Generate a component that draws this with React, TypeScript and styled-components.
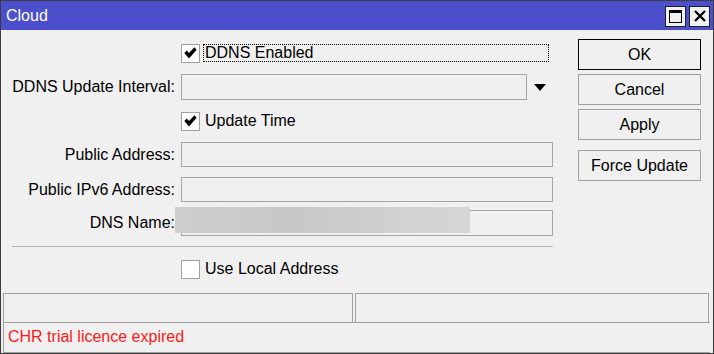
import React from "react";
import styled, { createGlobalStyle } from "styled-components";

const GlobalStyle = createGlobalStyle`
  html, body {
    margin: 0;
    padding: 0;
    background: #f0f0f0;
  }
  *, *:before, *:after {
    box-sizing: border-box;
    font-family: "Liberation Sans", Arial, sans-serif;
  }
`;

function CheckMark() {
  return (
    <svg width="13" height="12" viewBox="0 0 13 12">
      <path d="M0.3 6 L2.8 3.6 L5 6.1 L10.3 0.3 L12.7 2.7 L5 11.5 Z" fill="#000" />
    </svg>
  );
}

function CheckBox({ checked }: { checked?: boolean }) {
  return <StyledBox>{checked && <CheckMark />}</StyledBox>;
}

function Field({
  label,
  top,
  height,
  children,
}: {
  label?: string;
  top: number;
  height: number;
  children: React.ReactNode;
}) {
  return (
    <StyledRow $top={top} $height={height}>
      <StyledLabel>{label}</StyledLabel>
      <StyledCell>{children}</StyledCell>
    </StyledRow>
  );
}

export default function App() {
  return (
    <StyledWindow>
      <GlobalStyle />
      <StyledTitleBar>
        <StyledTitle>Cloud</StyledTitle>
        <StyledTitleButtons>
          <StyledTitleButton>
            <StyledMaxIcon />
          </StyledTitleButton>
          <StyledTitleButton>
            <svg width="12" height="12" viewBox="0 0 12 12">
              <path d="M1 1 L11 11 M11 1 L1 11" stroke="#000" strokeWidth="2.2" />
            </svg>
          </StyledTitleButton>
        </StyledTitleButtons>
      </StyledTitleBar>

      <StyledMain>
        <StyledForm>
          <Field top={11} height={24}>
            <CheckBox checked />
            <StyledFocusText>DDNS Enabled</StyledFocusText>
          </Field>
          <Field label="DDNS Update Interval:" top={9} height={26}>
            <StyledInput $width={346} />
            <StyledArrow />
          </Field>
          <Field top={9} height={24}>
            <CheckBox checked />
            <StyledCheckText>Update Time</StyledCheckText>
          </Field>
          <Field label="Public Address:" top={9} height={25}>
            <StyledInput />
          </Field>
          <Field label="Public IPv6 Address:" top={10} height={25}>
            <StyledInput />
          </Field>
          <Field label="DNS Name:" top={8} height={26}>
            <StyledInput />
            <StyledRedaction />
          </Field>
          <StyledSeparator />
          <Field top={10} height={24}>
            <CheckBox />
            <StyledCheckText>Use Local Address</StyledCheckText>
          </Field>
        </StyledForm>

        <StyledButtons>
          <StyledButton $default>OK</StyledButton>
          <StyledButton>Cancel</StyledButton>
          <StyledButton>Apply</StyledButton>
          <StyledButton $gap={10}>Force Update</StyledButton>
        </StyledButtons>
      </StyledMain>

      <StyledStatus>
        <StyledStatusCells>
          <StyledStatusCell $width={350} />
          <StyledStatusCell $width={354} />
        </StyledStatusCells>
        <StyledMessage>CHR trial licence expired</StyledMessage>
      </StyledStatus>
    </StyledWindow>
  );
}

const StyledWindow = styled.div`
  width: 714px;
  height: 354px;
  border: 1px solid #3c3c3c;
  background: #f0f0f0;
  display: flex;
  flex-direction: column;
  overflow: hidden;
`;

const StyledTitleBar = styled.div`
  height: 29px;
  background: #4b4fcb;
  display: flex;
  align-items: center;
  justify-content: space-between;
  padding: 0 3px 0 5px;
  flex-shrink: 0;
`;

const StyledTitle = styled.div`
  color: #ffffff;
  font-size: 16px;
  padding-top: 1px;
`;

const StyledTitleButtons = styled.div`
  display: flex;
  gap: 3px;
  margin-top: 1px;
`;

const StyledTitleButton = styled.div`
  width: 21px;
  height: 21px;
  background: #f0f0f0;
  border: 1px solid #202020;
  display: flex;
  align-items: center;
  justify-content: center;
`;

const StyledMaxIcon = styled.div`
  width: 13px;
  height: 13px;
  border: 1px solid #000;
  border-top-width: 3px;
`;

const StyledMain = styled.div`
  display: flex;
  height: 263px;
  flex-shrink: 0;
`;

const StyledForm = styled.div`
  width: 552px;
  display: flex;
  flex-direction: column;
`;

const StyledRow = styled.div<{ $top: number; $height: number }>`
  display: grid;
  grid-template-columns: 174px 372px;
  column-gap: 6px;
  margin-top: ${(p) => p.$top}px;
  height: ${(p) => p.$height}px;
  align-items: center;
`;

const StyledLabel = styled.div`
  text-align: right;
  font-size: 16px;
  color: #000;
  white-space: nowrap;
`;

const StyledCell = styled.div`
  position: relative;
  display: flex;
  align-items: center;
  height: 100%;
`;

const StyledBox = styled.div`
  width: 19px;
  height: 19px;
  background: #ffffff;
  border: 1px solid #a0a0a0;
  display: flex;
  align-items: center;
  justify-content: center;
  flex-shrink: 0;
`;

const StyledCheckText = styled.span`
  font-size: 16px;
  color: #000;
  margin-left: 5px;
  white-space: nowrap;
`;

const StyledFocusText = styled.span`
  font-size: 16px;
  color: #000;
  margin-left: 3px;
  width: 346px;
  height: 18px;
  line-height: 15px;
  padding-left: 1px;
  border: 1px dotted #000;
  white-space: nowrap;
`;

const StyledInput = styled.div<{ $width?: number }>`
  width: ${(p) => (p.$width ? `${p.$width}px` : "100%")};
  height: 100%;
  border: 1px solid #a5a5a5;
  background: #f0f0f0;
  flex-shrink: 0;
`;

const StyledArrow = styled.div`
  margin-left: 7px;
  width: 0;
  height: 0;
  border-left: 6.5px solid transparent;
  border-right: 6.5px solid transparent;
  border-top: 7px solid #000;
`;

const StyledRedaction = styled.div`
  position: absolute;
  left: -6px;
  top: -3px;
  width: 295px;
  height: 26px;
  background: linear-gradient(90deg, #cfcfcf 0%, #c7c7c7 40%, #d2d2d2 80%, #d6d6d6 100%);
`;

const StyledSeparator = styled.div`
  margin: 10px 0 0 11px;
  width: 541px;
  height: 1px;
  background: #b4b4b4;
`;

const StyledButtons = styled.div`
  margin-left: 25px;
  padding-top: 9px;
  display: flex;
  flex-direction: column;
  width: 123px;
`;

const StyledButton = styled.div<{ $default?: boolean; $gap?: number }>`
  height: 31px;
  margin-top: ${(p) => (p.$default ? 0 : p.$gap ?? 4)}px;
  border: 1px solid ${(p) => (p.$default ? "#000" : "#a0a0a0")};
  background: #f0f0f0;
  display: flex;
  align-items: center;
  justify-content: center;
  font-size: 16px;
  color: #000;
`;

const StyledStatus = styled.div`
  margin: 0 3px 0 2px;
  display: flex;
  flex-direction: column;
`;

const StyledStatusCells = styled.div`
  display: flex;
  gap: 2px;
`;

const StyledStatusCell = styled.div<{ $width: number }>`
  width: ${(p) => p.$width}px;
  height: 29px;
  border: 1px solid #a0a0a0;
  border-bottom: none;
`;

const StyledMessage = styled.div`
  height: 31px;
  border: 1px solid #a0a0a0;
  border-right: none;
  color: #ff1a1a;
  font-size: 16px;
  padding: 5px 0 0 4px;
`;
